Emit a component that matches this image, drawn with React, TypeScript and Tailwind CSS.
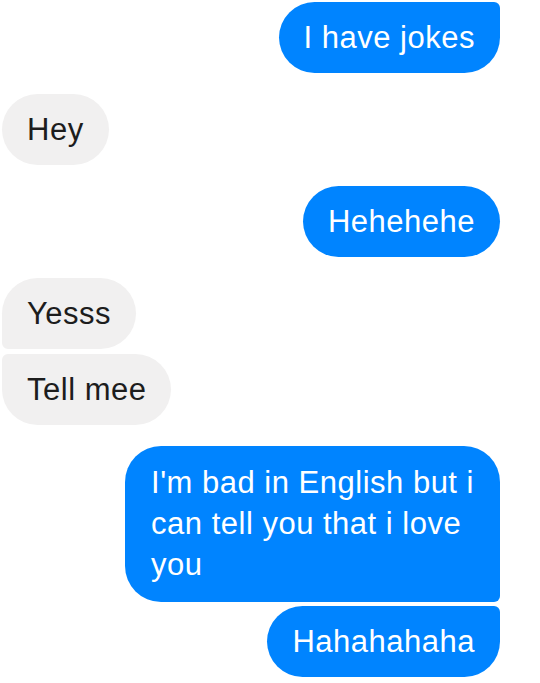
type Msg = {
  text: string[];
  me: boolean;
  corner?: string;
  gap: string;
};

const messages: Msg[] = [
  { text: ["I have jokes"], me: true, corner: "rounded-tr-[6px]", gap: "mt-[2px]" },
  { text: ["Hey"], me: false, gap: "mt-[21px]" },
  { text: ["Hehehehe"], me: true, gap: "mt-[21px]" },
  { text: ["Yesss"], me: false, corner: "rounded-bl-[6px]", gap: "mt-[21px]" },
  { text: ["Tell mee"], me: false, corner: "rounded-tl-[6px]", gap: "mt-[5px]" },
  {
    text: ["I'm bad in English but i", "can tell you that i love", "you"],
    me: true,
    corner: "rounded-br-[6px]",
    gap: "mt-[21px]",
  },
  { text: ["Hahahahaha"], me: true, corner: "rounded-tr-[6px]", gap: "mt-[4px]" },
];

function Bubble({ m }: { m: Msg }) {
  const multi = m.text.length > 1;
  return (
    <div className={`flex ${m.me ? "justify-end pr-[40px]" : "justify-start pl-[2px]"} ${m.gap}`}>
      <div
        className={`rounded-[36px] ${m.corner ?? ""} ${
          m.me ? "bg-[#0084ff] text-white" : "bg-[#f1f0f0] text-[#1d1d1d]"
        } ${multi ? "pl-[26px] pr-[26px] pt-[16px] pb-[17px]" : "px-[25px] py-[15px]"} text-[31px] leading-[41px] tracking-[0.5px]`}
      >
        {m.text.map((line, i) => (
          <div key={i} className="whitespace-nowrap">
            {line}
          </div>
        ))}
      </div>
    </div>
  );
}

export default function App() {
  return (
    <div className="w-[540px] h-[683px] bg-white overflow-hidden font-['Liberation_Sans',Arial,sans-serif]">
      {messages.map((m, i) => (
        <Bubble key={i} m={m} />
      ))}
    </div>
  );
}
